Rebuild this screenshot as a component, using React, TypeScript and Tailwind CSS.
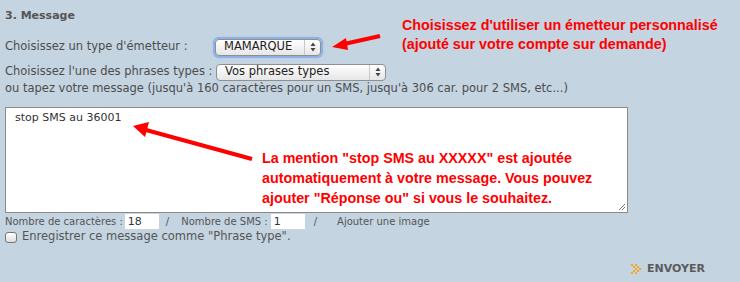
import React from "react";

function FakeSelect({ label, width, focused }: { label: string; width: number; focused?: boolean }) {
  return (
    <div
      className={`relative flex h-[17px] items-center rounded-[4px] border border-[#8f8f8f] bg-gradient-to-b from-white to-[#e6e6e6] text-[11.5px] text-[#222] ${
        focused ? "shadow-[0_0_0_2px_#8db2e3,0_0_3px_2px_#aac6ee]" : ""
      }`}
      style={{ width }}
    >
      <span className="pl-[8px] leading-none">{label}</span>
      <div className="absolute right-0 top-0 flex h-full w-[16px] flex-col items-center justify-center border-l border-[#c8c8c8]">
        <svg width="6" height="10" viewBox="0 0 6 10">
          <path d="M3 0.5 L5.5 4 L0.5 4 Z" fill="#444" />
          <path d="M3 9.5 L5.5 6 L0.5 6 Z" fill="#444" />
        </svg>
      </div>
    </div>
  );
}

export default function App() {
  return (
    <div className="relative h-[282px] w-[740px] overflow-hidden bg-[#c4d4e1] font-['DejaVu_Sans',Verdana,sans-serif] text-[#4d4d4d]">
      <div className="px-[5px] pt-[9px]">
        <h2 className="h-[14px] text-[11px] font-bold leading-[14px] text-[#555]">3. Message</h2>

        <div className="mt-[14px] flex h-[20px] items-center text-[11.5px]">
          <span className="w-[210px]">Choisissez un type d'émetteur :</span>
          <FakeSelect label="MAMARQUE" width={106} focused />
        </div>

        <div className="mt-[6px] flex h-[18px] items-center text-[11.5px]">
          <span className="w-[211px]">Choisissez l'une des phrases types :</span>
          <FakeSelect label="Vos phrases types" width={170} />
        </div>

        <div className="h-[14px] whitespace-nowrap text-[11.5px] leading-[14px]">
          ou tapez votre message (jusqu'à 160 caractères pour un SMS, jusqu'à 306 car. pour 2 SMS, etc...)
        </div>

        <div className="relative mt-[12px] h-[106px] w-[623px] border border-[#8a8a8a] bg-white px-[9px] pt-[2px] text-[11px] text-[#333]">
          stop SMS au 36001
          <svg className="absolute bottom-[1px] right-[1px]" width="9" height="9" viewBox="0 0 9 9">
            <path d="M8 2 L2 8 M8 5 L5 8" stroke="#777" strokeWidth="1" />
          </svg>
        </div>

        <div className="flex h-[16px] items-center text-[10px] text-[#555]">
          <span>Nombre de caractères :</span>
          <span className="ml-[2px] h-[15px] w-[34px] bg-white pl-[3px] text-[11px] leading-[15px] text-[#333]">18</span>
          <span className="ml-[7px]">/</span>
          <span className="ml-[12px]">Nombre de SMS :</span>
          <span className="ml-[3px] h-[15px] w-[34px] bg-white pl-[3px] text-[11px] leading-[15px] text-[#333]">1</span>
          <span className="ml-[9px]">/</span>
          <span className="ml-[20px]">Ajouter une image</span>
        </div>

        <div className="mt-[1px] flex h-[14px] items-center text-[11.5px] text-[#555]">
          <span className="h-[11px] w-[12px] rounded-[3px] border border-[#777] bg-gradient-to-b from-white to-[#ddd]" />
          <span className="ml-[5px]">Enregistrer ce message comme "Phrase type".</span>
        </div>

        <div className="mt-[18px] flex h-[14px] items-center justify-end pr-[30px]">
          <svg width="11" height="11" viewBox="0 0 11 11" className="mr-[5px]">
            <g fill="#f5a623">
              <rect x="0" y="0" width="2" height="2" />
              <rect x="2" y="2" width="2" height="2" />
              <rect x="4" y="4" width="2" height="2" />
              <rect x="2" y="6" width="2" height="2" />
              <rect x="0" y="8" width="2" height="2" />
              <rect x="4" y="0" width="2" height="2" />
              <rect x="6" y="2" width="2" height="2" />
              <rect x="8" y="4" width="2" height="2" />
              <rect x="6" y="6" width="2" height="2" />
              <rect x="4" y="8" width="2" height="2" />
            </g>
          </svg>
          <span className="text-[11px] font-bold text-[#5b5b5b]">ENVOYER</span>
        </div>
      </div>

      {/* annotations */}
      <div className="absolute left-[402px] top-[16px] font-['Liberation_Sans',Arial,sans-serif] text-[14.3px] font-bold leading-[19px] text-[#ff0000]">
        Choisissez d'utiliser un émetteur personnalisé
        <br />
        (ajouté sur votre compte sur demande)
      </div>
      <div className="absolute left-[262px] top-[148px] font-['Liberation_Sans',Arial,sans-serif] text-[14.3px] font-bold leading-[20px] text-[#ff0000]">
        La mention "stop SMS au XXXXX" est ajoutée
        <br />
        automatiquement à votre message. Vous pouvez
        <br />
        ajouter "Réponse ou" si vous le souhaitez.
      </div>
      <svg className="pointer-events-none absolute left-0 top-0" width="740" height="282">
        <line x1="380" y1="36" x2="344" y2="44" stroke="#ff0000" strokeWidth="4" />
        <path d="M332 47 L346 38 L348 50 Z" fill="#ff0000" />
        <line x1="252" y1="159" x2="146" y2="130" stroke="#ff0000" strokeWidth="4" />
        <path d="M133 126 L149 122 L145 137 Z" fill="#ff0000" />
      </svg>
    </div>
  );
}
